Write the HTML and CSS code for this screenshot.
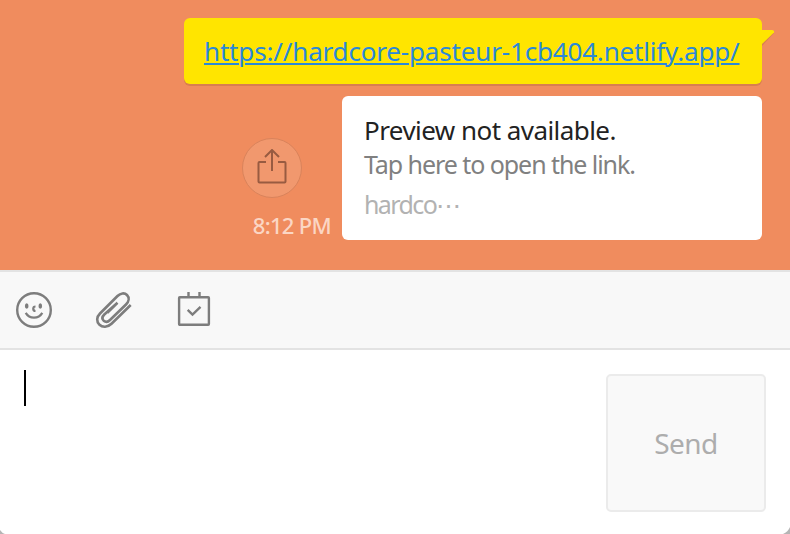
FILE: index.html
```html
<!DOCTYPE html>
<html lang="en">
<head>
<meta charset="utf-8">
<title>Chat</title>
<link rel="stylesheet" href="styles.css">
</head>
<body>
<main class="window">
  <section class="messages">
    <div class="bubble">
      <a class="link" href="#">https://hardcore-pasteur-1cb404.netlify.app/</a>
      <svg class="tail" width="14" height="18" viewBox="0 0 14 18"><path class="tail-shadow" d="M0 3H10Q12 3 12 5L0 18Z"/><path class="tail-fill" d="M0 2H10Q12.500 2 12 4.500L0 16Z"/></svg>
    </div>
    <div class="preview-row">
      <div class="meta">
        <button class="share" aria-label="Share">
          <svg width="32" height="38" viewBox="0 0 32 38"><path d="M10 13H3.500Q2.500 13 2.500 14V32.500Q2.500 33.500 3.500 33.500H28.500Q29.500 33.500 29.500 32.500V14Q29.500 13 28.500 13H22M16 22V1M9 8L16 1L23 8"/></svg>
        </button>
        <time class="time">8:12 PM</time>
      </div>
      <article class="card">
        <div class="title">Preview not available.</div>
        <div class="hint">Tap here to open the link.</div>
        <div class="host">hardco⋯</div>
      </article>
    </div>
  </section>
  <nav class="toolbar">
    <svg width="40" height="40" viewBox="0 0 40 40"><circle cx="20" cy="20" r="16.800"/><path class="mid" d="M11.700 22.900Q14.500 27.700 20 27.700T28.300 22.900M21.500 16.500A2.200 2.200 0 0 0 21.500 21"/><ellipse class="eye" cx="12.700" cy="16" rx="1.800" ry="2.800"/><ellipse class="eye" cx="26.300" cy="16" rx="1.800" ry="2.800"/></svg>
    <svg width="40" height="40" viewBox="0 0 40 40"><path class="clip" d="M36.700 15L17.500 33.700C13.500 37.500 8.500 37.500 5.500 34.700C2.200 31.500 2.500 27 6 23.500L23.500 6C26.500 3 30.500 2.500 33 5C35.500 7.500 35 11.500 32 14.500L16 30C14 32 11.500 32.200 9.700 30.700C8 29 8.300 26.500 10.300 24.500L23.500 12.700M23.500 12.700L13.300 22.700"/></svg>
    <svg width="40" height="40" viewBox="0 0 40 40"><rect x="5.100" y="7.200" width="29.800" height="27.600" rx=".7"/><path d="M14.500 7V2M25.500 7V2M13.700 19.800L18.500 24.500L26.500 16.800"/></svg>
  </nav>
  <section class="composer">
    <div class="input"><i class="caret"></i></div>
    <button class="send">Send</button>
  </section>
  <svg class="corner corner-left" width="8" height="8" viewBox="0 0 8 8"><path d="M0 4Q2 7 5 8H0Z"/></svg>
  <svg class="corner corner-right" width="8" height="8" viewBox="0 0 8 8"><path d="M8 1Q6 6 1 8H8Z"/></svg>
</main>
</body>
</html>
```
FILE: styles.css
```css
* { box-sizing: border-box; }
body { margin: 0; font-family: "Noto Sans", sans-serif; }
button { font: inherit; padding: 0; }
.window { position: relative; width: 790px; height: 534px; overflow: hidden; display: flex; flex-direction: column; background: #fff; }
.messages { height: 270px; padding: 18px 28px 0 0; background: #f08c5e; display: flex; flex-direction: column; align-items: flex-end; gap: 12px; }
.bubble { position: relative; width: 578px; height: 66px; padding-left: 20px; background: #ffe500; border-radius: 6px; box-shadow: 0 2px 0 #d87e50; display: flex; align-items: center; }
.link { color: #2b88d9; font-size: 26px; white-space: nowrap; letter-spacing: -.17px; text-decoration-thickness: 2px; text-underline-offset: 2px; }
.tail { position: absolute; left: 578px; top: 10px; }
.tail-fill { fill: #ffe500; }
.tail-shadow { fill: #d87e50; }
.preview-row { display: flex; gap: 11px; }
.meta { width: 89px; padding-top: 42px; display: flex; flex-direction: column; }
.share { width: 60px; height: 60px; border: 1px solid #d9835b; border-radius: 50%; background: #f1986e; display: flex; justify-content: center; align-items: center; }
.share svg { fill: none; stroke: #985b41; stroke-width: 2; }
.time { margin-top: 12px; color: #fbd6c4; font-size: 22px; font-weight: 500; line-height: 30px; letter-spacing: -.7px; white-space: nowrap; align-self: flex-end; }
.card { width: 420px; height: 144px; padding: 17px 22px; background: #fff; border-radius: 6px; white-space: nowrap; }
.title { color: #222; font-size: 26px; line-height: 34px; letter-spacing: -.55px; }
.hint { color: #808080; font-size: 25px; line-height: 35px; letter-spacing: -1.06px; }
.host { color: #b2b2b2; font-size: 25px; line-height: 36px; margin-top: 4px; letter-spacing: -1.6px; }
.toolbar { height: 80px; border-top: 2px solid #e3e3e3; border-bottom: 2px solid #e3e3e3; background: #f8f8f8; display: flex; align-items: center; gap: 40px; padding-left: 14px; }
.toolbar svg { fill: none; stroke: #7d7d7d; stroke-width: 2.400; }
.toolbar .mid { stroke-width: 2.200; }
.toolbar .clip { stroke-width: 2.600; }
.toolbar .eye { fill: #7d7d7d; stroke: none; }
.composer { flex: 1; display: flex; justify-content: space-between; padding: 20px 24px 0; }
.caret { display: block; width: 2px; height: 36px; background: #000; }
.send { width: 160px; height: 138px; margin-top: 4px; border: 2px solid #ebebeb; border-radius: 5px; background: #f9f9f9; color: #adadad; font-size: 28px; letter-spacing: -.5px; }
.corner { position: absolute; bottom: 0; fill: #b5b5b5; }
.corner-left { left: 0; }
.corner-right { right: 0; }
```
